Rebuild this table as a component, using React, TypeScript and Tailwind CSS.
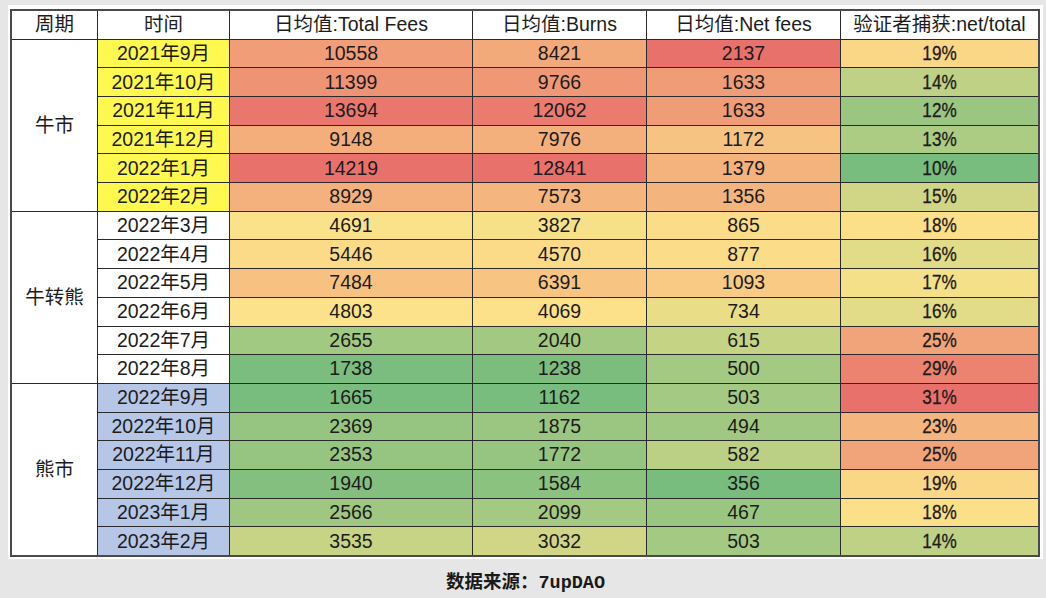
const rows: [string, number, number, number, number][] = [
  ["2021年9月", 10558, 8421, 2137, 19],
  ["2021年10月", 11399, 9766, 1633, 14],
  ["2021年11月", 13694, 12062, 1633, 12],
  ["2021年12月", 9148, 7976, 1172, 13],
  ["2022年1月", 14219, 12841, 1379, 10],
  ["2022年2月", 8929, 7573, 1356, 15],
  ["2022年3月", 4691, 3827, 865, 18],
  ["2022年4月", 5446, 4570, 877, 16],
  ["2022年5月", 7484, 6391, 1093, 17],
  ["2022年6月", 4803, 4069, 734, 16],
  ["2022年7月", 2655, 2040, 615, 25],
  ["2022年8月", 1738, 1238, 500, 29],
  ["2022年9月", 1665, 1162, 503, 31],
  ["2022年10月", 2369, 1875, 494, 23],
  ["2022年11月", 2353, 1772, 582, 25],
  ["2022年12月", 1940, 1584, 356, 19],
  ["2023年1月", 2566, 2099, 467, 18],
  ["2023年2月", 3535, 3032, 503, 14],
]

const periods = ["牛市", "牛转熊", "熊市"]
const timeBg = ["bg-[#fff94f]", "bg-white", "bg-[#b6c6e6]"]

const RED = [233, 113, 108]
const YELLOW = [252, 227, 138]
const GREEN = [120, 188, 126]

// excel style 3-colour scale: min green, 50th percentile yellow, max red
function scale(values: number[]) {
  const sorted = [...values].sort((a, b) => a - b)
  const min = sorted[0]
  const max = sorted[sorted.length - 1]
  const k = (sorted.length - 1) / 2
  const mid = sorted[Math.floor(k)] + (sorted[Math.ceil(k)] - sorted[Math.floor(k)]) * (k - Math.floor(k))
  return (v: number) => {
    let from = GREEN
    let to = YELLOW
    let t = 0
    if (v <= mid) {
      t = mid === min ? 1 : (v - min) / (mid - min)
    } else {
      from = YELLOW
      to = RED
      t = (v - mid) / (max - mid)
    }
    const c = from.map((f, i) => Math.round(f + (to[i] - f) * t))
    return `rgb(${c[0]},${c[1]},${c[2]})`
  }
}

const colorFns = [1, 2, 3, 4].map((i) => scale(rows.map((r) => r[i] as number)))

const sans = "font-['Liberation_Sans','Noto_Sans_CJK_SC',sans-serif]"

export default function App() {
  const headers = ["周期", "时间", "日均值:Total Fees", "日均值:Burns", "日均值:Net fees", "验证者捕获:net/total"]

  return (
    <div className="w-[1046px] h-[598px] bg-[#e6e6e6] pl-[8px] pt-[5px] overflow-hidden">
      <div className="w-[1035px] bg-white pl-[2px] pt-[4px] pb-[2px]">
        <div
          className={`grid grid-cols-[85px_131px_242px_173px_193px_197px] grid-rows-[repeat(19,minmax(0,1fr))] gap-px bg-[#2a2a2a] border-2 border-[#4a4a4a] w-[1030px] h-[548px] text-[19.5px] text-[#1c1c1c] ${sans}`}
        >
          {headers.map((h) => (
            <div key={h} className="bg-white flex items-center justify-center whitespace-nowrap">
              {h}
            </div>
          ))}
          {rows.map((r, i) => {
            const group = Math.floor(i / 6)
            return [
              i % 6 === 0 ? (
                <div key={`p${i}`} className="row-span-6 bg-white flex items-center justify-center">
                  {periods[group]}
                </div>
              ) : null,
              <div key={`t${i}`} className={`${timeBg[group]} flex items-center justify-center whitespace-nowrap`}>
                {r[0]}
              </div>,
              ...[1, 2, 3].map((c) => (
                <div
                  key={`c${i}-${c}`}
                  className="flex items-center justify-center"
                  style={{ backgroundColor: colorFns[c - 1](r[c]) }}
                >
                  {r[c]}
                </div>
              )),
              <div
                key={`pct${i}`}
                className="flex items-center justify-center"
                style={{ backgroundColor: colorFns[3](r[4]) }}
              >
                <span className="inline-block scale-x-[0.88] [-webkit-text-stroke:0.3px_#1c1c1c]">{r[4]}%</span>
              </div>,
            ]
          })}
        </div>
      </div>
      <div className="w-[1035px] flex justify-center pt-[11px] text-[18.5px] font-bold text-[#1a1a1a] font-['Liberation_Mono','Noto_Sans_CJK_SC',monospace]">
        数据来源：7upDAO
      </div>
    </div>
  )
}
